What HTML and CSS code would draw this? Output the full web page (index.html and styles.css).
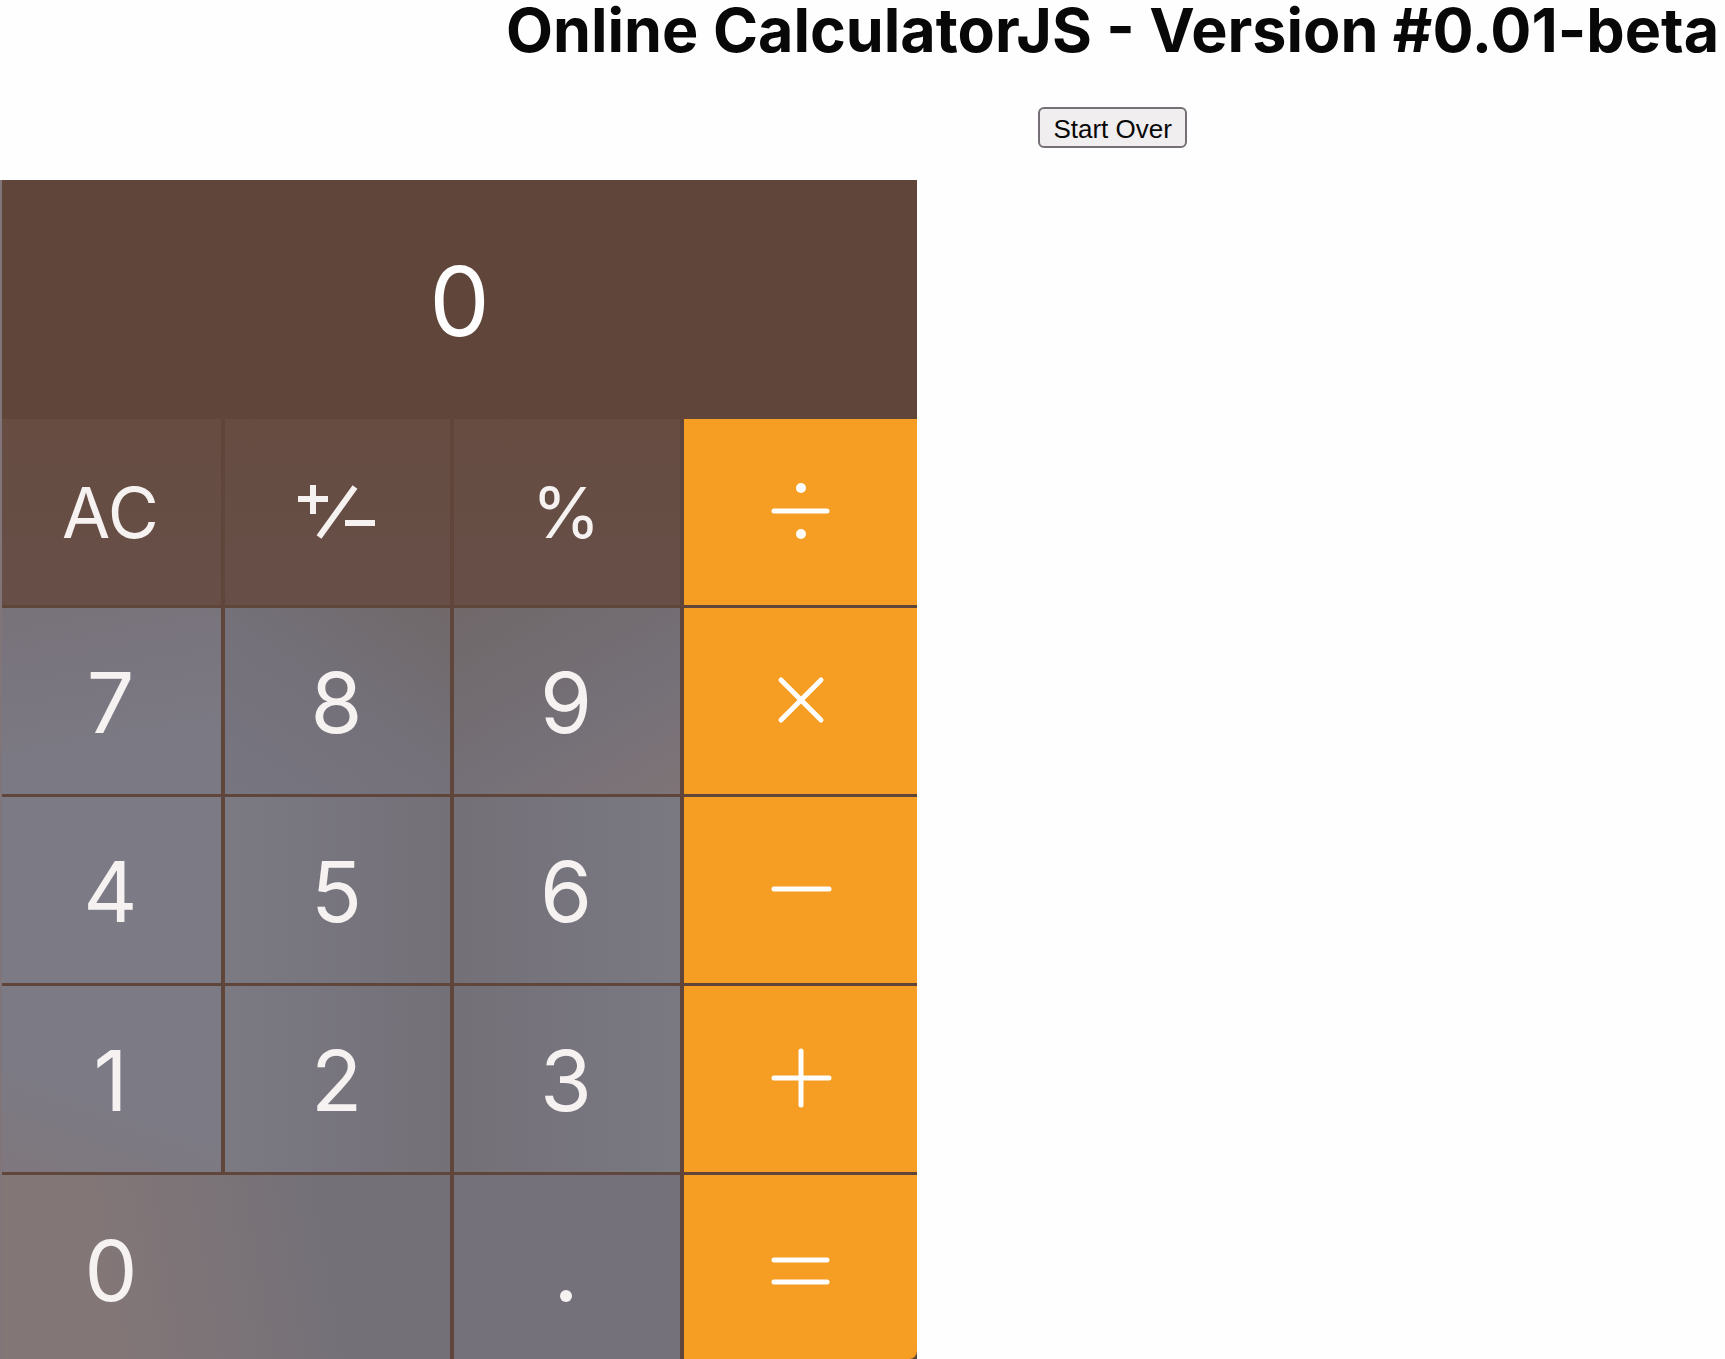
FILE: index.html
```html
<!DOCTYPE html>
<html lang="en">
<head>
<meta charset="utf-8">
<title>Online CalculatorJS</title>
<link rel="stylesheet" href="styles.css">
</head>
<body>
<header class="masthead">
  <h1 class="title">Online CalculatorJS - Version #0.01-beta</h1>
  <button class="restart" type="button">Start Over</button>
</header>
<main class="calculator">
  <output class="display">0</output>
  <div class="keys">
    <button class="key func" type="button">AC</button>
    <button class="key func" type="button" aria-label="Plus or minus">
      <svg class="icon sign" viewBox="0 0 80 54"><path d="M1 14H31M16 0V29M22 52L58 2M48 38H78"/></svg>
    </button>
    <button class="key func" type="button">%</button>
    <button class="key op" type="button" aria-label="Divide">
      <svg class="icon" viewBox="0 0 60 60"><path d="M3 29H56"/><circle cx="30" cy="6" r="5"/><circle cx="30" cy="52" r="5"/></svg>
    </button>
    <button class="key warm-top" type="button">7</button>
    <button class="key warm-side" type="button">8</button>
    <button class="key warm-corner" type="button">9</button>
    <button class="key op" type="button" aria-label="Multiply">
      <svg class="icon" viewBox="0 0 60 60"><path d="M10 9L50 49M50 9L10 49"/></svg>
    </button>
    <button class="key cool" type="button">4</button>
    <button class="key shade" type="button">5</button>
    <button class="key shade-left" type="button">6</button>
    <button class="key op" type="button" aria-label="Subtract">
      <svg class="icon" viewBox="0 0 60 60"><path d="M3 29H58"/></svg>
    </button>
    <button class="key cool-fade" type="button">1</button>
    <button class="key shade" type="button">2</button>
    <button class="key shade-left" type="button">3</button>
    <button class="key op" type="button" aria-label="Add">
      <svg class="icon" viewBox="0 0 60 60"><path d="M3 29H58M30 2V56"/></svg>
    </button>
    <button class="key zero" type="button"><span>0</span></button>
    <button class="key" type="button" aria-label="Decimal point">
      <svg class="icon" viewBox="0 0 60 60"><circle cx="30" cy="58" r="6"/></svg>
    </button>
    <button class="key op" type="button" aria-label="Equals">
      <svg class="icon" viewBox="0 0 60 60"><path d="M3 23H56M3 45H56"/></svg>
    </button>
  </div>
</main>
</body>
</html>
```
FILE: styles.css
```css
* { box-sizing: border-box; }

body {
  margin: 0;
  background: #fefefe;
  color: #080808;
  font-family: Inter, "Liberation Sans", sans-serif;
}

.masthead {
  display: flex;
  flex-direction: column;
  align-items: center;
  margin-left: 29%;
  height: 180px;
}

.title {
  margin: 0 0 47px;
  font-size: 61px;
  line-height: 60px;
  font-weight: 700;
  white-space: nowrap;
}

.restart {
  height: 41px;
  padding: 3px 13px 0;
  border: 2px solid #757076;
  border-radius: 6px;
  background: #f0eeef;
  color: #080808;
  font: 26px "Liberation Sans", Arial, sans-serif;
}

.calculator {
  width: 53.16%;
  border-left: 2px solid #807679;
  overflow: hidden;
  background: #60463a;
}

.display {
  display: flex;
  align-items: center;
  justify-content: center;
  height: 239px;
  padding-top: 2px;
  color: #fefefe;
  font-size: 96px;
}

.keys {
  display: grid;
  grid-template-columns: 219fr 225fr 226fr 233fr;
  grid-template-rows: repeat(4, 186px) 184px;
  gap: 3px 4px;
}

.key {
  display: flex;
  align-items: center;
  justify-content: center;
  min-width: 0;
  padding: 2px 2px 0 0;
  border: 0;
  background: #74717a;
  color: #f5f2f1;
  font: 84px Inter, "Liberation Sans", sans-serif;
}

.func {
  padding-top: 0;
  background: linear-gradient(#664c41, #674f48);
  font-size: 70px;
}

.warm-top { background: linear-gradient(170deg, #78727a, #7b7983 70%); }
.warm-side { background: linear-gradient(215deg, #706869, #74717a 50%, #777580); }
.warm-corner { background: linear-gradient(150deg, #706869, #757078 60%, #7e7477); }
.cool { background: #7c7a84; }
.cool-fade { background: linear-gradient(200deg, #7c7a84 60%, #7f777d); }
.shade { background: linear-gradient(90deg, #7b7982, #737078); }
.shade-left { background: linear-gradient(90deg, #737078, #7a7881); }

.zero {
  grid-column: span 2;
  display: grid;
  grid-template-columns: 219fr 229fr;
  padding-top: 6px;
  background: linear-gradient(80deg, #827677 25%, #737078 75%);
}

.op {
  padding: 0;
  background: #f69e23;
  color: #fefefe;
}

.icon {
  width: 60px;
  height: 60px;
  overflow: visible;
  fill: currentColor;
  stroke: currentColor;
  stroke-width: 5;
  stroke-linecap: round;
}

.icon circle { stroke: none; }

.sign {
  width: 80px;
  height: 54px;
  stroke-width: 6;
  stroke-linecap: butt;
}

.keys .key:last-child { border-bottom-right-radius: 8px; }
```
